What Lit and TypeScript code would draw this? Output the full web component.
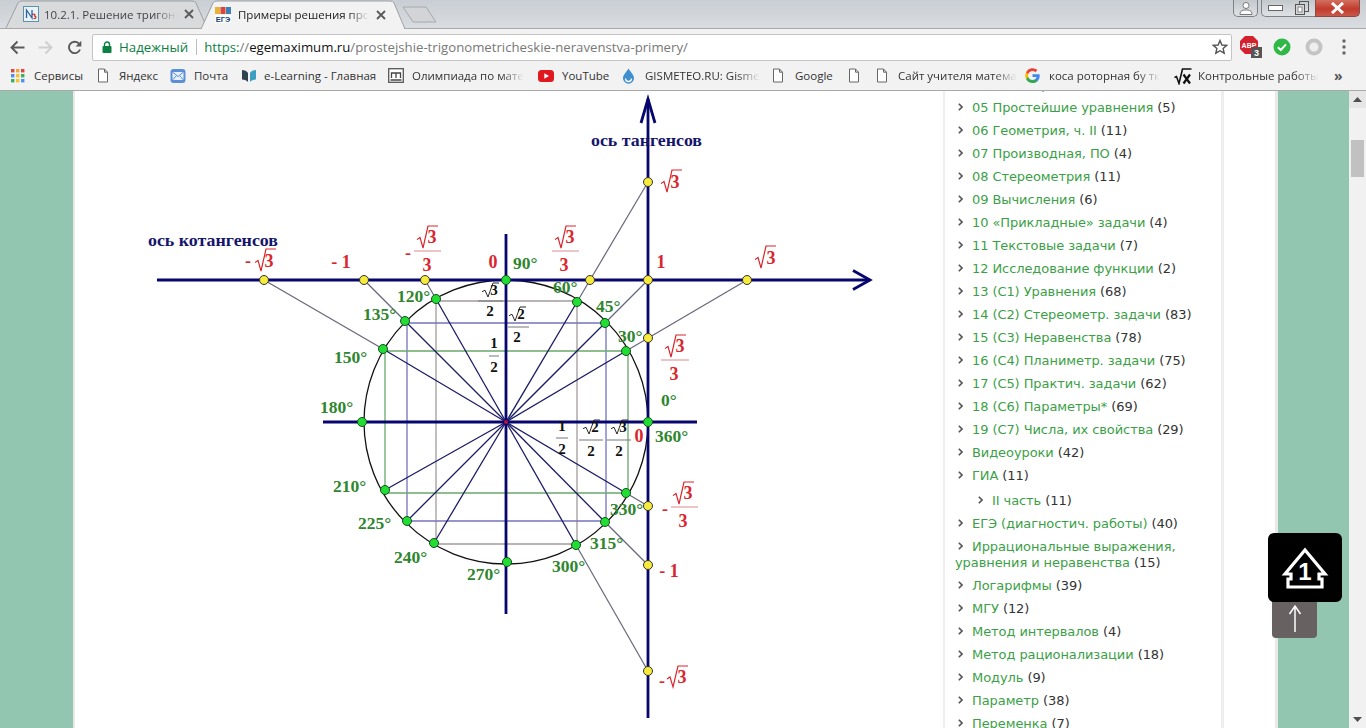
import { LitElement, html, css, svg } from "lit";
import { customElement } from "lit/decorators.js";

type Pt = [number, number];

const CENTER: Pt = [506, 422];

// points on the circle, with the angle label placed next to each one
const ANGLES: { p: Pt; label: string; lx: number; ly: number; radial: boolean }[] = [
  { p: [506, 280], label: "90°", lx: 513, ly: 269, radial: false },
  { p: [577, 302], label: "60°", lx: 553, ly: 293, radial: true },
  { p: [605, 323], label: "45°", lx: 596, ly: 312, radial: true },
  { p: [626, 351], label: "30°", lx: 618, ly: 342, radial: true },
  { p: [648, 422], label: "0°", lx: 661, ly: 406, radial: false },
  { p: [436, 299], label: "120°", lx: 397, ly: 302, radial: true },
  { p: [405, 321], label: "135°", lx: 363, ly: 320, radial: true },
  { p: [383, 349], label: "150°", lx: 334, ly: 363, radial: true },
  { p: [362, 422], label: "180°", lx: 320, ly: 413, radial: false },
  { p: [385, 490], label: "210°", lx: 333, ly: 492, radial: true },
  { p: [407, 521], label: "225°", lx: 358, ly: 529, radial: true },
  { p: [434, 543], label: "240°", lx: 394, ly: 563, radial: true },
  { p: [507, 562], label: "270°", lx: 467, ly: 580, radial: false },
  { p: [576, 545], label: "300°", lx: 552, ly: 572, radial: true },
  { p: [605, 522], label: "315°", lx: 590, ly: 549, radial: true },
  { p: [626, 493], label: "330°", lx: 610, ly: 515, radial: true },
];

const YELLOW: Pt[] = [
  [264, 280], [364, 280], [425, 280], [590, 280], [648, 280], [747, 280],
  [648, 182], [648, 338], [648, 506], [648, 565], [648, 671],
];

const EXTENSIONS: [Pt, Pt][] = [
  [[383, 349], [264, 280]],
  [[405, 321], [364, 280]],
  [[436, 299], [425, 280]],
  [[577, 302], [648, 182]],
  [[605, 323], [648, 280]],
  [[626, 351], [747, 280]],
  [[626, 493], [648, 506]],
  [[605, 522], [648, 565]],
  [[576, 545], [648, 671]],
];

const GUIDES: { color: string; x1: number; x2: number; y1: number; y2: number }[] = [
  { color: "#a39a9c", x1: 436, x2: 577, y1: 301, y2: 544 },
  { color: "#7474bd", x1: 407, x2: 606, y1: 323, y2: 521 },
  { color: "#6ca86c", x1: 385, x2: 628, y1: 351, y2: 493 },
];

// x0/x1 span of the root sign, top/bottom its height
function root(x0: number, x1: number, top: number, bottom: number, color: string, w = 1.2) {
  const h = bottom - top;
  const d = `M${x0} ${top + h * 0.62} L${x0 + 3} ${top + h * 0.52} L${x0 + 6} ${bottom} L${x0 + 11} ${top} L${x1} ${top}`;
  return svg`<path d=${d} fill="none" stroke=${color} stroke-width=${w}></path>`;
}

const RED = "#d9262e";
const INK = "#111";

function num(x: number, y: number, t: string, cls: string) {
  return svg`<text class=${cls} x=${x} y=${y} text-anchor="middle">${t}</text>`;
}

function bar(x1: number, x2: number, y: number, color: string) {
  return svg`<line x1=${x1} x2=${x2} y1=${y} y2=${y} stroke=${color} stroke-width="1"></line>`;
}

function redRootFrac(rx: number, top: number, barX1: number, barX2: number, denX: number) {
  return svg`
    ${root(rx, rx + 21, top, top + 22, RED)}
    ${num(rx + 15, top + 17, "3", "red")}
    ${bar(barX1, barX2, top + 25, "#d98a8e")}
    ${num(denX, top + 45, "3", "red")}`;
}

function inkRootFrac(rx: number, top: number, d: string, barX1: number, barX2: number, denX: number, barY: number, denY: number) {
  return svg`
    ${root(rx, rx + 17, top, top + 14, INK, 0.9)}
    ${num(rx + 12, top + 12, d, "ink")}
    ${bar(barX1, barX2, barY, "#777")}
    ${num(denX, denY, "2", "ink")}`;
}

const CATEGORIES: { t: string; n: number; sub?: boolean }[] = [
  { t: "04 Геометрия, ч. I", n: 29 },
  { t: "05 Простейшие уравнения", n: 5 },
  { t: "06 Геометрия, ч. II", n: 11 },
  { t: "07 Производная, ПО", n: 4 },
  { t: "08 Стереометрия", n: 11 },
  { t: "09 Вычисления", n: 6 },
  { t: "10 «Прикладные» задачи", n: 4 },
  { t: "11 Текстовые задачи", n: 7 },
  { t: "12 Исследование функции", n: 2 },
  { t: "13 (C1) Уравнения", n: 68 },
  { t: "14 (C2) Стереометр. задачи", n: 83 },
  { t: "15 (C3) Неравенства", n: 78 },
  { t: "16 (C4) Планиметр. задачи", n: 75 },
  { t: "17 (C5) Практич. задачи", n: 62 },
  { t: "18 (C6) Параметры*", n: 69 },
  { t: "19 (C7) Числа, их свойства", n: 29 },
  { t: "Видеоуроки", n: 42 },
  { t: "ГИА", n: 11 },
  { t: "II часть", n: 11, sub: true },
  { t: "ЕГЭ (диагностич. работы)", n: 40 },
  { t: "Иррациональные выражения, уравнения и неравенства", n: 15 },
  { t: "Логарифмы", n: 39 },
  { t: "МГУ", n: 12 },
  { t: "Метод интервалов", n: 4 },
  { t: "Метод рационализации", n: 18 },
  { t: "Модуль", n: 9 },
  { t: "Параметр", n: 38 },
  { t: "Переменка", n: 7 },
];

const docIcon = html`<svg width="12" height="15" viewBox="0 0 12 15"><path d="M1.5 1h6l3 3.2V14h-9z M7.5 1v3.2h3" fill="#fff" stroke="#666" stroke-width="1"/></svg>`;

const appsIcon = html`<svg width="14" height="14" viewBox="0 0 14 14">
  ${[
    ["#e2453c", 0, 0], ["#f2a33a", 5, 0], ["#e2453c", 10, 0],
    ["#4f8ef0", 0, 5], ["#f4c430", 5, 5], ["#3cae5c", 10, 5],
    ["#3cae5c", 0, 10], ["#f4c430", 5, 10], ["#4f8ef0", 10, 10],
  ].map(([c, x, y]) => svg`<rect x=${x} y=${y} width="3.4" height="3.4" fill=${c}></rect>`)}
</svg>`;

const mailIcon = html`<svg width="16" height="16" viewBox="0 0 16 16"><rect x="0.5" y="1" width="15" height="14" rx="3" fill="#5b8fd6"/><rect x="2.5" y="4" width="11" height="8" fill="#e6effa"/><path d="M2.5 4 8 8.5 13.5 4M2.5 12 6.5 7.5M13.5 12 9.5 7.5" fill="none" stroke="#5b8fd6"/></svg>`;

const bookIcon = html`<svg width="16" height="14" viewBox="0 0 16 14"><path d="M1 1c2.5 0 5 1 6 3v9C6 11.5 3.5 10.5 1 10.5z" fill="#2e4250"/><path d="M15 1c-2.5 0-5 1-6 3v9c1-1.5 3.5-2.5 6-2.5z" fill="#3d9fc0"/></svg>`;

const mIcon = html`<svg width="16" height="15" viewBox="0 0 16 15"><rect x="0.7" y="0.7" width="14.6" height="13.6" fill="#fff" stroke="#555" stroke-width="1.3"/><path d="M3.5 10V5h9v5M8 5v5M2.5 12h11" fill="none" stroke="#444" stroke-width="1.3"/></svg>`;

const ytIcon = html`<svg width="16" height="12" viewBox="0 0 16 12"><rect width="16" height="12" rx="3.5" fill="#e0181f"/><path d="M6.3 3.3v5.4L11 6z" fill="#fff"/></svg>`;

const dropIcon = html`<svg width="13" height="16" viewBox="0 0 13 16"><path d="M6.5 0.5C9 4.5 12 7 12 10.2A5.5 5.5 0 0 1 1 10.2C1 7 4 4.5 6.5 0.5z" fill="#3f8ed0"/><path d="M3.5 10.5a3 3 0 0 0 6 0" fill="none" stroke="#fff" stroke-width="1.3"/></svg>`;

const googleIcon = html`<svg width="15" height="15" viewBox="0 0 16 16"><path d="M15.7 8.2c0-.6-.1-1.100-.2-1.600H8v3h4.300a3.700 3.700 0 0 1-1.600 2.400v2h2.600c1.500-1.400 2.400-3.400 2.400-5.800z" fill="#4285f4"/><path d="M8 16c2.200 0 4-.7 5.300-2l-2.600-2c-.7.500-1.600.8-2.700.8-2.100 0-3.800-1.400-4.500-3.300H1.100v2.100A8 8 0 0 0 8 16z" fill="#34a853"/><path d="M3.500 9.500a4.800 4.800 0 0 1 0-3V4.400H1.100a8 8 0 0 0 0 7.200z" fill="#fbbc05"/><path d="M8 3.200c1.200 0 2.200.4 3 1.200l2.300-2.300A8 8 0 0 0 1.100 4.400l2.400 2.100C4.200 4.600 5.900 3.200 8 3.200z" fill="#ea4335"/></svg>`;

const sqrtIcon = html`<svg width="18" height="18" viewBox="0 0 18 18"><path d="M0.5 10.5 2.5 9.5 5 16.5 8.500 2H17.500" fill="none" stroke="#111" stroke-width="1.600"/><path d="M9.500 7.500l6.500 9M16 7.500l-6.500 9" fill="none" stroke="#111" stroke-width="2.200"/></svg>`;

const BOOKMARKS: { icon: unknown; label: string; w: number; iw: number; fade?: boolean }[] = [
  { icon: appsIcon, label: "Сервисы", w: 86, iw: 23 },
  { icon: docIcon, label: "Яндекс", w: 73, iw: 22 },
  { icon: mailIcon, label: "Почта", w: 71, iw: 24 },
  { icon: bookIcon, label: "e-Learning - Главная", w: 147, iw: 23 },
  { icon: mIcon, label: "Олимпиада по мате", w: 150, iw: 24, fade: true },
  { icon: ytIcon, label: "YouTube", w: 84, iw: 24 },
  { icon: dropIcon, label: "GISMETEO.RU: Gisme", w: 150, iw: 23, fade: true },
  { icon: docIcon, label: "Google", w: 76, iw: 23 },
  { icon: docIcon, label: "", w: 28, iw: 12 },
  { icon: docIcon, label: "Сайт учителя матема", w: 149, iw: 22, fade: true },
  { icon: googleIcon, label: "коса роторная бу тк", w: 149, iw: 24, fade: true },
  { icon: sqrtIcon, label: "Контрольные работы", w: 150, iw: 24, fade: true },
];

@customElement("app-root")
export class AppRoot extends LitElement {
  static styles = css`
    :host {
      display: block;
      height: 728px;
      overflow: hidden;
      font-family: "Open Sans", sans-serif;
      background: #fff;
    }
    .chrome { height: 91px; box-sizing: border-box; background: #f2f2f2; border-bottom: 1px solid #a9a9a9; }

    .tabstrip {
      height: 29px;
      box-sizing: border-box;
      display: flex;
      align-items: flex-end;
      padding-left: 5px;
      background: linear-gradient(#c9ced4, #d9dce0);
      border-bottom: 1px solid #a8a8a8;
      position: relative;
    }
    .tab {
      position: relative;
      width: 203px;
      height: 28px;
      margin-right: -8px;
      display: flex;
      align-items: center;
      flex: none;
      font-size: 11.5px;
      color: #444;
    }
    .tab.active { width: 206px; color: #222; z-index: 1; height: 29px; margin-bottom: -1px; }
    .tab-shape { position: absolute; inset: 0; width: 100%; height: 100%; }
    .fav { position: relative; margin-left: 18px; width: 16px; height: 16px; flex: none; }
    .tab.active .fav { margin-left: 15px; }
    .tab-title {
      position: relative;
      margin-left: 5px;
      width: 133px;
      white-space: nowrap;
      -webkit-mask-image: linear-gradient(90deg, #000 84%, transparent);
      mask-image: linear-gradient(90deg, #000 84%, transparent);
    }
    .tab.active .tab-title { margin-left: 7px; width: 131px; }
    .tab-x { position: relative; margin-left: 7px; width: 10px; height: 10px; flex: none; }
    .newtab { margin: 0 0 5px 4px; width: 36px; height: 17px; flex: none; }
    .spacer { flex: 1; }
    .winctl { align-self: flex-start; display: flex; margin-right: 6px; }
    .wbtn {
      height: 17px;
      box-sizing: border-box;
      border: 1px solid #7e8287;
      border-top: none;
      display: flex;
      align-items: center;
      justify-content: center;
      background: linear-gradient(#c3c8cd, #dfe2e5);
    }
    .profile { width: 25px; border-radius: 0 0 5px 5px; margin-right: 3px; }
    .minb { width: 28px; border-radius: 0 0 0 5px; border-right: none; }
    .resb { width: 26px; border-left: none; border-right: none; }
    .close { width: 45px; border-radius: 0 0 5px 0; background: linear-gradient(#d2705f, #c23b2d 55%, #c9584a); border-color: #8d4a42; }

    .toolbar { height: 34px; display: flex; align-items: center; padding-top: 2px; box-sizing: border-box; }
    .nav { width: 15px; height: 15px; flex: none; margin-left: 10px; }
    .nav.fwd { margin-left: 13px; }
    .nav.reload { margin-left: 14px; }
    .omni {
      margin-left: 10px;
      width: 1140px;
      height: 27px;
      box-sizing: border-box;
      background: #fff;
      border: 1px solid #c4c4c4;
      border-radius: 2px;
      display: flex;
      align-items: center;
      flex: none;
    }
    .lock { margin-left: 9px; width: 10px; height: 12px; flex: none; }
    .secure { margin-left: 7px; color: #0b8043; font-size: 13.3px; }
    .sep { width: 1px; height: 16px; background: #bdbdbd; margin: 0 7px 0 8px; flex: none; }
    .url { color: #787878; white-space: nowrap; font-size: 13.2px; }
    .url .https { color: #0b8043; }
    .url .host { color: #111; }
    .star { margin-left: auto; margin-right: 3px; width: 16px; height: 16px; }
    .ext { display: flex; align-items: center; flex: none; }
    .abp { margin-left: 8px; width: 24px; height: 24px; }
    .ok { margin-left: 9px; width: 18px; height: 18px; }
    .ring { margin-left: 14px; width: 18px; height: 18px; }
    .dots { margin-left: 19px; width: 4px; height: 16px; }

    .bookmarks {
      height: 25px;
      display: flex;
      align-items: center;
      padding-left: 11px;
      font-size: 11.5px;
      color: #333;
    }
    .bm { display: flex; align-items: center; flex: none; white-space: nowrap; }
    .bm-icon { display: flex; flex: none; }
    .bm-label.fade {
      -webkit-mask-image: linear-gradient(90deg, #000 80%, transparent);
      mask-image: linear-gradient(90deg, #000 80%, transparent);
    }
    .more { margin-left: 10px; color: #555; font-size: 14px; font-weight: 700; }

    .page { position: relative; height: 637px; display: flex; background: #93c6b1; overflow: hidden; }
    .gutter { width: 73px; flex: none; }
    .gutter.right { width: 71px; }
    .column {
      width: 1200px;
      flex: none;
      display: flex;
      background: #fff;
      border-left: 2px solid #e9e9e9;
      border-right: 3px solid #e9e9e9;
    }
    .main { width: 868px; flex: none; }
    .main svg { display: block; }
    .side {
      width: 266px;
      flex: none;
      padding-left: 10px;
      border-left: 2px solid #eee;
      border-right: 3px solid #eee;
    }
    ul { list-style: none; margin: 0; padding: 0; }
    .side > ul { margin-top: -18px; }
    li {
      padding: 3.5px 0;
      font: 13px/16px "DejaVu Sans", sans-serif;
      letter-spacing: -0.08px;
      color: #333;
    }
    li.sub { margin: 2px 0 0 20px; }
    li a { color: #3c9f48; text-decoration: none; }
    .bullet { display: inline-block; width: 5px; height: 8px; margin: 0 9px 1px 3px; }

    .scrollbar { width: 17px; flex: none; background: #f1f1f1; display: flex; flex-direction: column; align-items: center; }
    .sb-btn { width: 17px; height: 17px; background: #e6e6e6; display: flex; align-items: center; justify-content: center; flex: none; }
    .sb-btn.down { background: #f1f1f1; margin-top: auto; }
    .thumb { width: 13px; height: 37px; background: #c1c1c1; margin-top: 32px; flex: none; }

    .to-top {
      position: absolute;
      left: 1272px;
      top: 509px;
      width: 45px;
      height: 38px;
      background: #676161;
      border-radius: 0 0 4px 4px;
    }
    .to-top svg { display: block; }
    .badge {
      position: absolute;
      left: 1268px;
      top: 442px;
      width: 74px;
      height: 69px;
      background: #000;
      border-radius: 6px;
    }
    .badge svg { display: block; }
    .badge text { font: 700 24px "Liberation Sans", sans-serif; fill: #fff; }

    .lbl { font: 700 17.500px "Liberation Serif", serif; fill: #2f862f; }
    .red { font: 700 18px "Liberation Serif", serif; fill: #d9262e; }
    .ink { font: 700 15px "Liberation Serif", serif; fill: #111; }
    .axis { font: 700 16px "Liberation Serif", serif; fill: #15156b; }
  `;

  private renderTabShape(w: number, h: number, fill: string, stroke: string) {
    const d = `M1 ${h} L13 3 Q14 1 17 1 L${w - 16} 1 Q${w - 13} 1 ${w - 12} 3 L${w - 1} ${h}`;
    return html`<svg class="tab-shape" viewBox="0 0 ${w} ${h}" preserveAspectRatio="none">
      <path d=${d} fill=${fill} stroke=${stroke} stroke-width="1"></path>
    </svg>`;
  }

  private renderDiagram() {
    const navy = "#06066e";
    return html`<svg width="868" height="637" viewBox="75 91 868 637">
      <circle cx="506" cy="422" r="142" fill="none" stroke="#111" stroke-width="1.3"></circle>

      ${GUIDES.map(
        (g) => svg`<path d="M${g.x1} ${g.y1}H${g.x2}V${g.y2}H${g.x1}Z" fill="none" stroke=${g.color} stroke-width="1.3"></path>`
      )}

      ${ANGLES.filter((a) => a.radial).map(
        (a) => svg`<line x1=${CENTER[0]} y1=${CENTER[1]} x2=${a.p[0]} y2=${a.p[1]} stroke="#1c1c66" stroke-width="1.3"></line>`
      )}
      ${EXTENSIONS.map(
        ([a, b]) => svg`<line x1=${a[0]} y1=${a[1]} x2=${b[0]} y2=${b[1]} stroke="#66667c" stroke-width="1.2"></line>`
      )}

      <g stroke=${navy} stroke-width="2.8" fill="none">
        <path d="M157 280H870"></path>
        <path d="M853 270.5 870 280 853 289.5"></path>
        <path d="M648 718V99"></path>
        <path d="M641 123 648 99 655 123"></path>
        <path d="M506 234V614"></path>
        <path d="M323 422H697"></path>
      </g>
      <circle cx="506" cy="422" r="2" fill="#b01540"></circle>

      ${ANGLES.map(
        (a) => svg`<circle cx=${a.p[0]} cy=${a.p[1]} r="4.5" fill="#22dd33" stroke="#14521c" stroke-width="1"></circle>`
      )}
      ${YELLOW.map(
        (p) => svg`<circle cx=${p[0]} cy=${p[1]} r="4.5" fill="#f6ea3c" stroke="#333" stroke-width="1"></circle>`
      )}
      ${ANGLES.map((a) => svg`<text class="lbl" x=${a.lx} y=${a.ly}>${a.label}</text>`)}
      <text class="lbl" x="655" y="442">360°</text>

      <text class="axis" x="148" y="246" textLength="130" lengthAdjust="spacingAndGlyphs">ось котангенсов</text>
      <text class="axis" x="591" y="146" textLength="111" lengthAdjust="spacingAndGlyphs">ось тангенсов</text>

      <!-- cotangent axis values -->
      ${num(248, 267, "-", "red")}
      ${root(255, 276, 249, 271, RED)}
      ${num(269, 267, "3", "red")}
      ${num(341, 268, "- 1", "red")}
      ${num(408, 259, "-", "red")}
      ${redRootFrac(417, 226, 414, 441, 427)}
      ${num(493, 268, "0", "red")}
      ${redRootFrac(555, 226, 552, 579, 564)}
      ${num(661, 268, "1", "red")}
      ${root(755, 776, 246, 268, RED)}
      ${num(771, 264, "3", "red")}

      <!-- tangent axis values -->
      ${root(661, 682, 170, 192, RED)}
      ${num(675, 188, "3", "red")}
      ${redRootFrac(665, 335, 661, 689, 674)}
      ${num(639, 442, "0", "red")}
      ${num(665, 515, "-", "red")}
      ${redRootFrac(673, 482, 671, 698, 683)}
      ${num(669, 577, "- 1", "red")}
      ${num(662, 687, "-", "red")}
      ${root(667, 688, 666, 687, RED)}
      ${num(682, 683, "3", "red")}

      <!-- sine and cosine fractions -->
      ${inkRootFrac(482, 283, "3", 478, 503, 490, 301, 316)}
      ${inkRootFrac(509, 307, "2", 508, 529, 517, 327, 342)}
      ${num(494, 348, "1", "ink")}
      ${bar(489, 499, 356, "#777")}
      ${num(494, 372, "2", "ink")}
      ${num(562, 431, "1", "ink")}
      ${bar(556, 568, 438, "#777")}
      ${num(562, 454, "2", "ink")}
      ${inkRootFrac(583, 420, "2", 579, 603, 591, 440, 456)}
      ${inkRootFrac(611, 420, "3", 607, 631, 619, 440, 456)}
    </svg>`;
  }

  private renderSide() {
    return html`<aside class="side">
      <ul>
        ${CATEGORIES.map(
          (c) => html`<li class=${c.sub ? "sub" : ""}>
            <svg class="bullet" viewBox="0 0 5 8"><path d="M0.8 0.8 4 4 0.8 7.2" fill="none" stroke="#555" stroke-width="1.6"></path></svg><a href="#">${c.t}</a> (${c.n})
          </li>`
        )}
      </ul>
    </aside>`;
  }

  render() {
    const xIcon = html`<svg class="tab-x" viewBox="0 0 10 10"><path d="M1 1 9 9M9 1 1 9" stroke="#5a5a5a" stroke-width="1.8"></path></svg>`;
    return html`
      <div class="chrome">
        <div class="tabstrip">
          <div class="tab">
            ${this.renderTabShape(203, 28, "#d9dadc", "#9c9fa3")}
            <svg class="fav" viewBox="0 0 16 16">
              <rect x="0.5" y="0.5" width="15" height="15" fill="#e9f3f5" stroke="#5b93a8"></rect>
              <path d="M3.5 12V4L9 12V4" fill="none" stroke="#2f5fa8" stroke-width="1.3"></path>
              <path d="M9 8.5c3-1 4 1 2 1.5 3 0 2.5 3-.5 2.5" fill="none" stroke="#c83434" stroke-width="1.2"></path>
            </svg>
            <span class="tab-title">10.2.1. Решение тригонс</span>
            ${xIcon}
          </div>
          <div class="tab active">
            ${this.renderTabShape(206, 29, "#f2f2f2", "#9c9fa3")}
            <svg class="fav" viewBox="0 0 16 16">
              <rect x="0" y="0" width="5" height="7" fill="#e8b13a"></rect>
              <rect x="5.5" y="0" width="5" height="7" fill="#d8473c"></rect>
              <rect x="11" y="0" width="5" height="7" fill="#3f7fb5"></rect>
              <rect x="0" y="8" width="16" height="8" fill="#fff"></rect>
              <text x="8" y="15" text-anchor="middle" font-family="Liberation Sans" font-weight="700" font-size="7.5" fill="#123f7a">ЕГЭ</text>
            </svg>
            <span class="tab-title">Примеры решения про</span>
            ${xIcon}
          </div>
          <svg class="newtab" viewBox="0 0 36 17"><path d="M1 1H24L34 16H11z" fill="#d2d4d7" stroke="#a6a8ac"></path></svg>
          <div class="spacer"></div>
          <div class="winctl">
            <div class="wbtn profile">
              <svg width="14" height="13" viewBox="0 0 14 13"><circle cx="7" cy="3.5" r="3" fill="#fff" stroke="#777"></circle><path d="M1 12.5c0-4 3-4.5 6-4.5s6 .5 6 4.5z" fill="#fff" stroke="#777"></path></svg>
            </div>
            <div class="wbtn minb"><svg width="15" height="6" viewBox="0 0 15 6"><rect x="0.5" y="0.5" width="14" height="5" fill="#fff" stroke="#666"></rect></svg></div>
            <div class="wbtn resb"><svg width="14" height="14" viewBox="0 0 14 14"><rect x="4.5" y="0.5" width="9" height="10" fill="none" stroke="#555"></rect><rect x="0.5" y="3.5" width="9" height="10" fill="#d5d8db" stroke="#555"></rect><rect x="3" y="6" width="4" height="5" fill="#fff" stroke="#888"></rect></svg></div>
            <div class="wbtn close"><svg width="15" height="12" viewBox="0 0 15 12"><path d="M2 1 13 11M13 1 2 11" stroke="#fff" stroke-width="3"></path></svg></div>
          </div>
        </div>

        <div class="toolbar">
          <svg class="nav" viewBox="0 0 15 15"><path d="M14.5 7.5H2M7.5 1.5l-6 6 6 6" fill="none" stroke="#5a5a5a" stroke-width="1.9"></path></svg>
          <svg class="nav fwd" viewBox="0 0 15 15"><path d="M0.5 7.5H13M7.5 1.5l6 6-6 6" fill="none" stroke="#cfcfcf" stroke-width="1.9"></path></svg>
          <svg class="nav reload" viewBox="0 0 15 15"><path d="M13 9.5A5.7 5.7 0 1 1 11.8 3.5" fill="none" stroke="#5a5a5a" stroke-width="1.9"></path><path d="M14.3 0.8V6.5H8.6z" fill="#5a5a5a"></path></svg>
          <div class="omni">
            <svg class="lock" viewBox="0 0 10 12"><path d="M2.5 5.5V3.5a2.5 2.5 0 0 1 5 0v2" fill="none" stroke="#0b8043" stroke-width="1.4"></path><rect x="0.5" y="5" width="9" height="7" rx="1" fill="#0b8043"></rect></svg>
            <span class="secure">Надежный</span>
            <span class="sep"></span>
            <span class="url"><span class="https">https:</span>//<span class="host">egemaximum.ru</span>/prostejshie-trigonometricheskie-neravenstva-primery/</span>
            <svg class="star" viewBox="0 0 16 16"><path d="M8 1.5 9.9 6l4.8.4-3.6 3.1 1.1 4.7L8 11.7l-4.2 2.5 1.1-4.7L1.3 6.4 6.1 6z" fill="none" stroke="#555" stroke-width="1.4"></path></svg>
          </div>
          <div class="ext">
            <svg class="abp" viewBox="0 0 24 24">
              <path d="M5 1h8l5 5v8l-5 5H5l-5-5V6z" fill="#d3212d"></path>
              <text x="9" y="13" text-anchor="middle" font-family="Liberation Sans" font-weight="700" font-size="7" fill="#fff">ABP</text>
              <rect x="11" y="12" width="11" height="11" fill="#555"></rect>
              <text x="16.5" y="21" text-anchor="middle" font-family="Liberation Sans" font-weight="700" font-size="9" fill="#fff">3</text>
            </svg>
            <svg class="ok" viewBox="0 0 18 18"><circle cx="9" cy="9" r="8.5" fill="#2eb848"></circle><path d="M4.8 9.2 7.8 12 13 6.3" fill="none" stroke="#fff" stroke-width="2"></path></svg>
            <svg class="ring" viewBox="0 0 18 18"><circle cx="9" cy="9" r="6.5" fill="#eee" stroke="#c4c4c4" stroke-width="4"></circle></svg>
            <svg class="dots" viewBox="0 0 4 16"><circle cx="2" cy="2" r="1.7" fill="#666"></circle><circle cx="2" cy="8" r="1.7" fill="#666"></circle><circle cx="2" cy="14" r="1.7" fill="#666"></circle></svg>
          </div>
        </div>

        <div class="bookmarks">
          ${BOOKMARKS.map(
            (b) => html`<div class="bm" style="width:${b.w}px">
              <span class="bm-icon" style="width:${b.iw}px">${b.icon}</span>
              <span class="bm-label ${b.fade ? "fade" : ""}">${b.label}</span>
            </div>`
          )}
          <span class="more">»</span>
        </div>
      </div>

      <div class="page">
        <div class="gutter"></div>
        <div class="column">
          <div class="main">${this.renderDiagram()}</div>
          ${this.renderSide()}
        </div>
        <div class="gutter right"></div>
        <div class="scrollbar">
          <div class="sb-btn"><svg width="9" height="5" viewBox="0 0 9 5"><path d="M4.5 0 9 5H0z" fill="#505050"></path></svg></div>
          <div class="thumb"></div>
          <div class="sb-btn down"><svg width="9" height="5" viewBox="0 0 9 5"><path d="M0 0H9L4.5 5z" fill="#505050"></path></svg></div>
        </div>
        <div class="to-top">
          <svg width="45" height="38" viewBox="0 0 45 38"><path d="M23 32V7M17.5 14 23 6l5.5 8" fill="none" stroke="#fff" stroke-width="1.5"></path></svg>
        </div>
        <div class="badge">
          <svg width="74" height="69" viewBox="0 0 74 69">
            <path d="M37 17 57 41H51V46H54V54H20V46H23V41H17z" fill="none" stroke="#fff" stroke-width="3.2"></path>
            <text x="37" y="47" text-anchor="middle">1</text>
          </svg>
        </div>
      </div>
    `;
  }
}

declare global {
  interface HTMLElementTagNameMap { "app-root": AppRoot; }
}
